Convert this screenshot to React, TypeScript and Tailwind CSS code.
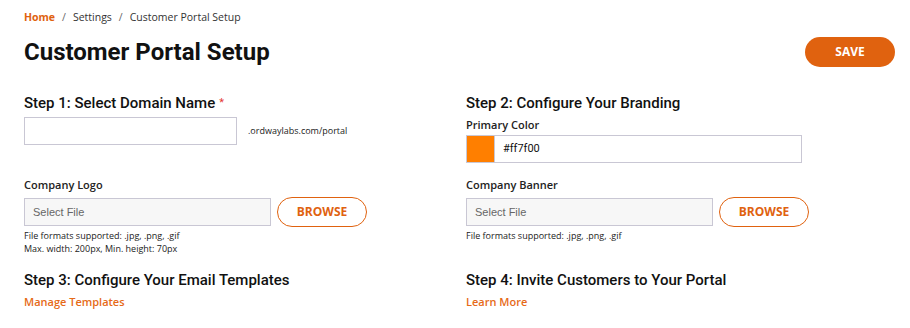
import React from 'react';

const open = "font-['Open_Sans',sans-serif]";
const roboto = "font-['Roboto',sans-serif]";

function StepTitle({ children, required }: { children: React.ReactNode; required?: boolean }) {
  return (
    <h2 className={`${roboto} text-[15px] font-medium leading-[18px] text-[#111]`}>
      {children}
      {required && <span className="ml-[4px] align-[2px] text-[11px] font-normal text-[#e53935]">*</span>}
    </h2>
  );
}

function Label({ children }: { children: React.ReactNode }) {
  return <div className={`${open} text-[11px] font-semibold leading-[14px] text-[#222]`}>{children}</div>;
}

function FileField({ label, notes }: { label: string; notes: string[] }) {
  return (
    <div>
      <Label>{label}</Label>
      <div className="mt-[5px] flex items-center gap-[6px]">
        <div className="flex h-[28px] w-[247px] items-center border border-[#c9c7d4] bg-[#f7f7f7] px-[8px] font-['Liberation_Sans',sans-serif] text-[11px] text-[#666]">
          Select File
        </div>
        <button className={`${open} h-[30px] w-[90px] rounded-full border border-[#e0620f] text-[12px] font-bold text-[#e0620f]`}>
          BROWSE
        </button>
      </div>
      <div className={`${open} mt-[2px] text-[9px] leading-[13px] text-[#222]`}>
        {notes.map((n) => (
          <div key={n}>{n}</div>
        ))}
      </div>
    </div>
  );
}

export default function App() {
  return (
    <div className="h-[328px] w-[910px] bg-white px-6 pt-[10px]">
      <nav className={`${open} flex items-center gap-[7px] text-[10.5px] leading-[14px] text-[#333]`}>
        <span className="font-bold text-[#e0620f]">Home</span>
        <span className="text-[#666]">/</span>
        <span>Settings</span>
        <span className="text-[#666]">/</span>
        <span>Customer Portal Setup</span>
      </nav>

      <div className="mt-[13px] flex items-center justify-between">
        <h1 className={`${roboto} text-[24px] font-bold leading-[30px] text-[#111]`}>Customer Portal Setup</h1>
        <button className={`${open} mr-[-9px] h-[30px] w-[90px] rounded-full bg-[#e0620f] text-[12px] font-bold text-white`}>
          SAVE
        </button>
      </div>

      <div className="mt-[27px] grid grid-cols-[442px_1fr]">
        <div>
          <StepTitle required>Step 1: Select Domain Name</StepTitle>
          <div className="mt-[5px] flex items-center gap-[11px]">
            <div className="h-[28px] w-[213px] border border-[#c9c7d4] bg-white" />
            <span className={`${open} text-[9px] text-[#222]`}>.ordwaylabs.com/portal</span>
          </div>
        </div>
        <div>
          <StepTitle>Step 2: Configure Your Branding</StepTitle>
          <div className="mt-[6px]">
            <Label>Primary Color</Label>
          </div>
          <div className="mt-[3px] flex h-[28px] w-[336px] items-stretch border border-[#c9c7d4]">
            <div className="w-[27px] bg-[#ff7f00]" />
            <div className="flex items-center border-l border-[#c9c7d4] pl-[8px] font-['Roboto',sans-serif] text-[11px] text-[#111]">
              #ff7f00
            </div>
          </div>
        </div>
      </div>

      <div className="mt-[15px] grid grid-cols-[442px_1fr]">
        <FileField
          label="Company Logo"
          notes={['File formats supported: .jpg, .png, .gif', 'Max. width: 200px, Min. height: 70px']}
        />
        <FileField label="Company Banner" notes={['File formats supported: .jpg, .png, .gif']} />
      </div>

      <div className="mt-[16px] grid grid-cols-[442px_1fr]">
        <div>
          <StepTitle>Step 3: Configure Your Email Templates</StepTitle>
          <a className={`${open} mt-[5px] block text-[11px] font-semibold text-[#e66a17]`}>Manage Templates</a>
        </div>
        <div>
          <StepTitle>Step 4: Invite Customers to Your Portal</StepTitle>
          <a className={`${open} mt-[5px] block text-[11px] font-semibold text-[#e66a17]`}>Learn More</a>
        </div>
      </div>
    </div>
  );
}
